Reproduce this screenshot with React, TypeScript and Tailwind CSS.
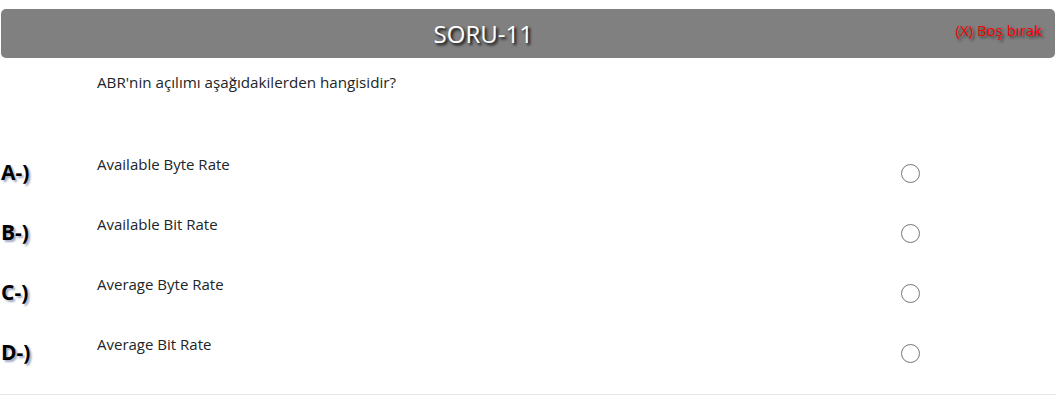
const options = [
  { key: 'A-)', text: 'Available Byte Rate' },
  { key: 'B-)', text: 'Available Bit Rate' },
  { key: 'C-)', text: 'Average Byte Rate' },
  { key: 'D-)', text: 'Average Bit Rate' },
];

export default function App() {
  return (
    <div className="w-[1056px] h-[407px] bg-white font-['Open_Sans',sans-serif] text-[#212529]">
      <div className="pt-[9px] px-px">
        {/* header */}
        <div className="flex h-[49px] rounded-[5px] bg-[#808080]">
          <div className="w-[967px] pl-[10px] flex items-center justify-center">
            <span className="text-[24px] leading-[30px] text-white [text-shadow:2px_2px_3px_#000]">SORU-11</span>
          </div>
          <div className="flex-1 flex justify-end pr-[13px] pt-[10px]">
            <span className="text-[15px] leading-[22px] text-[#ff0000] whitespace-nowrap [text-shadow:2px_2px_3px_#333]">(X) Boş bırak</span>
          </div>
        </div>
      </div>

      <div className="pl-[97px] pt-[13px] text-[15.2px] leading-[22px]">
        ABR'nin açılımı aşağıdakilerden hangisidir?
      </div>

      <div className="mt-[53px] border-b border-[#e5e5e5] pb-[8px]">
        {options.map(o => (
          <div key={o.key} className="flex h-[60px]">
            <div className="w-[97px] pt-[12px] pl-px font-bold text-[21px] leading-[28px] text-black [text-shadow:2px_2px_2px_#a3acc2]">
              {o.key}
            </div>
            <div className="w-[804px] pt-[8px] text-[15px] leading-[20px]">{o.text}</div>
            <div className="pt-[18px]">
              <div className="w-[19px] h-[19px] rounded-full border-[1.5px] border-[#767676] bg-white" />
            </div>
          </div>
        ))}
      </div>
    </div>
  );
}
